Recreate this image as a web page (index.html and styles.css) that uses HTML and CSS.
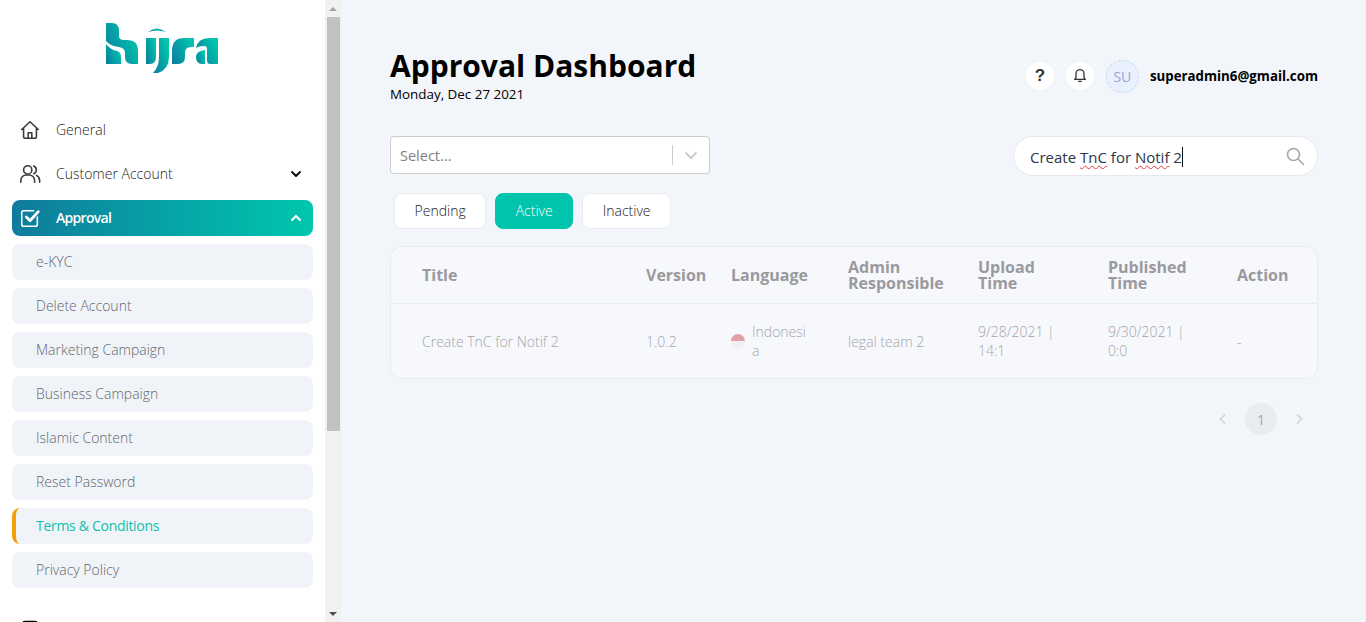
FILE: index.html
```html
<!DOCTYPE html>
<html lang="en">
<head>
  <meta charset="UTF-8">
  <title>Approval Dashboard</title>
  <link rel="stylesheet" href="styles.css">
</head>
<body>
  <!-- Sidebar -->
  <aside class="sidebar">
    <div class="logo">
      <svg width="112" height="50" viewBox="0 0 112 50">
        <defs>
          <linearGradient id="logoGrad" x1="0" y1="1" x2="1" y2="0.4">
            <stop offset="0" stop-color="#0b7a9e"/>
            <stop offset="1" stop-color="#00c4ac"/>
          </linearGradient>
        </defs>
        <g fill="url(#logoGrad)">
          <path d="M0 0H6Q13 0 13 8V13Q13 17 18 17H21Q32 17 32 28V41H26Q19 41 19 34V30Q19 25 13 24Q4 23 0 18Z"/>
          <path d="M0 21Q5 27 11 28Q15 29 15 34V41H0Z"/>
          <path d="M40 15H50V34Q50 41 44 41H40Z"/>
          <path d="M53 15H63V34Q63 46 52 50H47Q53 44 53 34Z"/>
          <path d="M42 9Q51 2 60 9Q51 6 42 9Z"/>
          <path d="M66 28Q66 15 78 15H88V24H85Q79 24 79 30V34Q79 41 72 41H66Z"/>
          <path d="M90 25Q92 15 103 15H112V41H104Q101 41 101 37V26Q101 23 98 23Q93 23 90 25Z"/>
          <path d="M90 33Q91 28 99 27V41H96Q90 41 90 33Z"/>
        </g>
      </svg>
    </div>

    <nav class="nav">
      <a class="nav-item">
        <svg class="nav-icon" viewBox="0 0 24 24"><path d="M3 11.500 12 3l9 8.500M5 10v9a2 2 0 0 0 2 2h10a2 2 0 0 0 2-2v-9M10 21v-6h4v6"/></svg>
        <span>General</span>
      </a>
      <a class="nav-item">
        <svg class="nav-icon" viewBox="0 0 24 24"><circle cx="9.500" cy="7.500" r="4.500"/><path d="M2 21v-2a6 6 0 0 1 6-6h3a6 6 0 0 1 6 6v2M16 3.300a4.500 4.500 0 0 1 0 8.400M19 13.500a6 6 0 0 1 3.500 5.500v2"/></svg>
        <span>Customer Account</span>
        <svg class="nav-chevron" viewBox="0 0 12 12"><path d="M2 4l4 4 4-4"/></svg>
      </a>
      <a class="nav-item nav-active">
        <svg class="nav-icon" viewBox="0 0 24 24"><path d="M20 11v8a2 2 0 0 1-2 2H5a2 2 0 0 1-2-2V6a2 2 0 0 1 2-2h11"/><path class="tick" d="M8 11l4 4 9-10"/></svg>
        <span>Approval</span>
        <svg class="nav-chevron" viewBox="0 0 12 12"><path d="M2 8l4-4 4 4"/></svg>
      </a>
      <a class="sub-item">e-KYC</a>
      <a class="sub-item">Delete Account</a>
      <a class="sub-item">Marketing Campaign</a>
      <a class="sub-item">Business Campaign</a>
      <a class="sub-item">Islamic Content</a>
      <a class="sub-item">Reset Password</a>
      <a class="sub-item sub-active">Terms &amp; Conditions</a>
      <a class="sub-item">Privacy Policy</a>
      <a class="nav-item nav-cut">
        <svg class="nav-icon" viewBox="0 0 24 24"><path d="M4 5a3 3 0 0 1 3-3h10a3 3 0 0 1 3 3v16H4z"/></svg>
      </a>
    </nav>
  </aside>

  <div class="scrollbar">
    <span class="arrow-up"></span>
    <div class="thumb"></div>
    <span class="arrow-down"></span>
  </div>

  <!-- Main content -->
  <main class="main">
    <header class="top">
      <div>
        <h1>Approval Dashboard</h1>
        <p class="date">Monday, Dec 27 2021</p>
      </div>
      <div class="top-right">
        <span class="round-btn help">?</span>
        <span class="round-btn">
          <svg class="bell-icon" width="16" height="16" viewBox="0 0 24 24"><path class="bell" d="M6 16V10a6 6 0 0 1 12 0v6l2 2.500H4zM10 21.500h4"/></svg>
        </span>
        <span class="avatar">SU</span>
        <span class="email">superadmin6@gmail.com</span>
      </div>
    </header>

    <div class="filters">
      <div class="select">
        <span class="select-text">Select...</span>
        <span class="select-sep"></span>
        <svg class="select-arrow" width="20" height="20" viewBox="0 0 20 20"><path d="M4.500 7.500 10 13l5.500-5.500"/></svg>
      </div>
      <div class="search">
        <span class="search-text">Create <span class="typo">TnC</span> for <span class="typo">Notif</span> <span class="caret">2</span></span>
        <svg class="search-icon" width="20" height="20" viewBox="0 0 20 20"><circle cx="8.500" cy="8.500" r="6"/><path d="M13 13l5.500 5.500"/></svg>
      </div>
    </div>

    <div class="tabs">
      <button class="tab">Pending</button>
      <button class="tab tab-active">Active</button>
      <button class="tab">Inactive</button>
    </div>

    <div class="table-card">
      <table>
        <colgroup>
          <col class="c-title"><col class="c-version"><col class="c-lang"><col class="c-admin"><col class="c-time"><col class="c-time2"><col class="c-action">
        </colgroup>
        <thead>
          <tr>
            <th>Title</th>
            <th>Version</th>
            <th>Language</th>
            <th>Admin Responsible</th>
            <th>Upload Time</th>
            <th>Published Time</th>
            <th>Action</th>
          </tr>
        </thead>
        <tbody>
          <tr>
            <td>Create TnC for Notif 2</td>
            <td>1.0.2</td>
            <td>
              <div class="lang">
                <span class="flag"></span>
                <span class="lang-name">Indonesia</span>
              </div>
            </td>
            <td>legal team 2</td>
            <td>9/28/2021 | 14:1</td>
            <td>9/30/2021 | 0:0</td>
            <td>-</td>
          </tr>
        </tbody>
      </table>
    </div>

    <div class="pager">
      <svg class="pager-arrow" width="10" height="12" viewBox="0 0 10 12"><path d="M7 1.500 2.500 6 7 10.500"/></svg>
      <span class="page-num">1</span>
      <svg class="pager-arrow" width="10" height="12" viewBox="0 0 10 12"><path d="M3 1.500 7.500 6 3 10.500"/></svg>
    </div>
  </main>
</body>
</html>
```

FILE: styles.css
```css
* {
  box-sizing: border-box;
}
html, body {
  height: 622px;
  overflow: hidden;
}
body {
  margin: 0;
  display: flex;
  font-family: "Open Sans", sans-serif;
  font-size: 14px;
  color: #000;
  background: #f2f5fa;
}

/* Sidebar */
.sidebar {
  width: 325px;
  height: 622px;
  flex: none;
  overflow: hidden;
  background: #fff;
  padding: 23px 12px 0;
}
.logo {
  display: flex;
  justify-content: center;
  height: 89px;
  padding-right: 2px;
}
.nav {
  display: flex;
  flex-direction: column;
  gap: 8px;
}
.nav-item {
  display: flex;
  align-items: center;
  height: 36px;
  flex: none;
  padding: 0 11px 0 7px;
  border-radius: 8px;
  color: #222;
  font-weight: 300;
}
.nav-item span {
  margin-bottom: 2px;
}
.nav-icon {
  width: 22px;
  height: 22px;
  margin-right: 15px;
  fill: none;
  stroke: #3a3a3a;
  stroke-width: 1.700;
  stroke-linecap: round;
  stroke-linejoin: round;
  flex: none;
}
.nav-chevron {
  width: 12px;
  height: 12px;
  margin-left: auto;
  fill: none;
  stroke: #111;
  stroke-width: 2;
  stroke-linecap: round;
  stroke-linejoin: round;
}
.nav-active {
  background: linear-gradient(90deg, #0f7b9c, #00c7ae);
  color: #fff;
  font-weight: 600;
  letter-spacing: -0.7px;
}
.nav-active .nav-icon {
  stroke: #fff;
}
.nav-active .nav-icon .tick {
  stroke-width: 3;
}
.nav-active .nav-chevron {
  stroke: #fff;
}
.nav-cut {
  margin-top: 17px;
  color: #000;
}
.nav-cut .nav-icon {
  stroke: #000;
  stroke-width: 2.500;
}
.sub-item {
  display: flex;
  align-items: center;
  height: 36px;
  flex: none;
  padding: 0 0 2px 24px;
  background: #f0f4f9;
  border-radius: 8px;
  color: #62666d;
  font-weight: 300;
}
.sub-active {
  color: #0fbfa7;
  font-weight: 400;
  letter-spacing: -0.3px;
  border-left: 4px solid #f59e0b;
  padding-left: 20px;
}

/* Fake scrollbar, the page itself does not scroll */
.scrollbar {
  width: 16px;
  height: 622px;
  flex: none;
  position: relative;
  background: #f1f1f1;
}
.thumb {
  position: absolute;
  top: 17px;
  left: 2px;
  width: 13px;
  height: 414px;
  background: #c1c1c1;
}
.arrow-up, .arrow-down {
  position: absolute;
  left: 4px;
  border-left: 4px solid transparent;
  border-right: 4px solid transparent;
}
.arrow-up {
  top: 7px;
  border-bottom: 4px solid #a3a3a3;
}
.arrow-down {
  bottom: 6px;
  border-top: 4px solid #505050;
}

/* Main */
.main {
  flex: 1;
  min-width: 0;
  padding: 46px 48px 0 49px;
}
.top {
  display: flex;
  justify-content: space-between;
  height: 90px;
}
h1 {
  margin: 0;
  font-size: 30px;
  line-height: 40px;
  font-weight: 700;
}
.date {
  margin: 0;
  font-size: 13.400px;
  line-height: 16px;
}
.top-right {
  display: flex;
  align-items: center;
  height: 60px;
}
.round-btn {
  display: flex;
  align-items: center;
  justify-content: center;
  width: 28px;
  height: 28px;
  margin-right: 12px;
  border-radius: 50%;
  background: #fff;
}
.help {
  font-family: "Liberation Sans", sans-serif;
  font-size: 17px;
  font-weight: 700;
  color: #333;
}
.bell-icon {
  margin-bottom: 3px;
}
.bell {
  fill: none;
  stroke: #333;
  stroke-width: 2;
  stroke-linecap: round;
  stroke-linejoin: round;
}
.avatar {
  display: flex;
  align-items: center;
  justify-content: center;
  width: 33px;
  height: 33px;
  margin-right: 11px;
  border: 1px dashed #c5d8f5;
  border-radius: 50%;
  background: #e8f1fd;
  color: #9aa8d6;
  font-size: 14px;
}
.email {
  font-size: 13.300px;
  font-weight: 700;
}
.filters {
  display: flex;
  justify-content: space-between;
  align-items: flex-start;
}
.select {
  display: flex;
  align-items: center;
  width: 320px;
  height: 38px;
  padding: 0 8px 0 9px;
  background: #fff;
  border: 1px solid #ccc;
  border-radius: 4px;
}
.select-text {
  flex: 1;
  font-size: 14.500px;
  color: #808080;
}
.select-sep {
  width: 1px;
  height: 20px;
  margin-right: 8px;
  background: #ccc;
}
.select-arrow {
  fill: none;
  stroke: #ccc;
  stroke-width: 2;
}
.search {
  display: flex;
  align-items: center;
  justify-content: space-between;
  width: 305px;
  height: 40px;
  padding: 0 12px 0 16px;
  background: #fff;
  border: 1px solid #e6e9ef;
  border-radius: 20px;
}
.search-text {
  margin-top: 2px;
  font-size: 15px;
  line-height: 22px;
  color: #2d3748;
  white-space: pre;
}
.typo {
  text-decoration: underline wavy #e03a3a 1px;
  text-underline-offset: 2px;
}
.caret {
  border-right: 1px solid #111;
}
.search-icon {
  fill: none;
  stroke: #a0a7b3;
  stroke-width: 1.600;
  stroke-linecap: round;
}
.tabs {
  display: flex;
  gap: 9px;
  margin-top: 17px;
  padding-left: 4px;
}
.tab {
  height: 36px;
  padding: 0 19.500px 2px;
  font: inherit;
  font-weight: 300;
  color: #222;
  background: #fff;
  border: 1px solid #e8ebf0;
  border-radius: 8px;
}
.tab-active {
  background: #00c4ac;
  border-color: #00c4ac;
  color: #fff;
}
.table-card {
  margin-top: 17px;
  background: #f6f8fc;
  border: 1px solid #e8edf5;
  border-radius: 12px;
}
table {
  width: 926px;
  table-layout: fixed;
  border-collapse: collapse;
}
.c-title { width: 255px; }
.c-version { width: 85px; }
.c-lang { width: 117px; }
.c-admin { width: 130px; }
.c-time { width: 130px; }
.c-time2 { width: 129px; }
.c-action { width: 80px; }
th, td {
  padding: 0 32px 0 0;
  text-align: left;
}
th:first-child, td:first-child {
  padding-left: 31px;
}
th {
  height: 56px;
  border-bottom: 1px solid #e8edf5;
  font-size: 16px;
  line-height: 16px;
  font-weight: 700;
  color: #9a9a9e;
}
th:last-child {
  padding-right: 0;
}
td {
  height: 75px;
  font-size: 14px;
  line-height: 19px;
  font-weight: 300;
  color: #a3a5ab;
  padding-top: 1px;
}
td:nth-child(4) {
  padding-right: 0;
}
.lang {
  display: flex;
  align-items: center;
  gap: 7px;
  margin-right: -14px;
}
.flag {
  width: 14px;
  height: 14px;
  flex: none;
  border-radius: 50%;
  background: linear-gradient(#e2a1a6 50%, #f0f0f3 50%);
}
.lang-name {
  width: 56px;
  word-break: break-all;
}
.pager {
  display: flex;
  align-items: center;
  justify-content: flex-end;
  gap: 17px;
  margin-top: 24px;
  padding-right: 14px;
}
.pager-arrow {
  fill: none;
  stroke: #d0d3d8;
  stroke-width: 1.600;
}
.page-num {
  display: flex;
  align-items: center;
  justify-content: center;
  width: 32px;
  height: 32px;
  border-radius: 50%;
  background: #e8ecf1;
  color: #a3a5ab;
  font-size: 14px;
}
```
